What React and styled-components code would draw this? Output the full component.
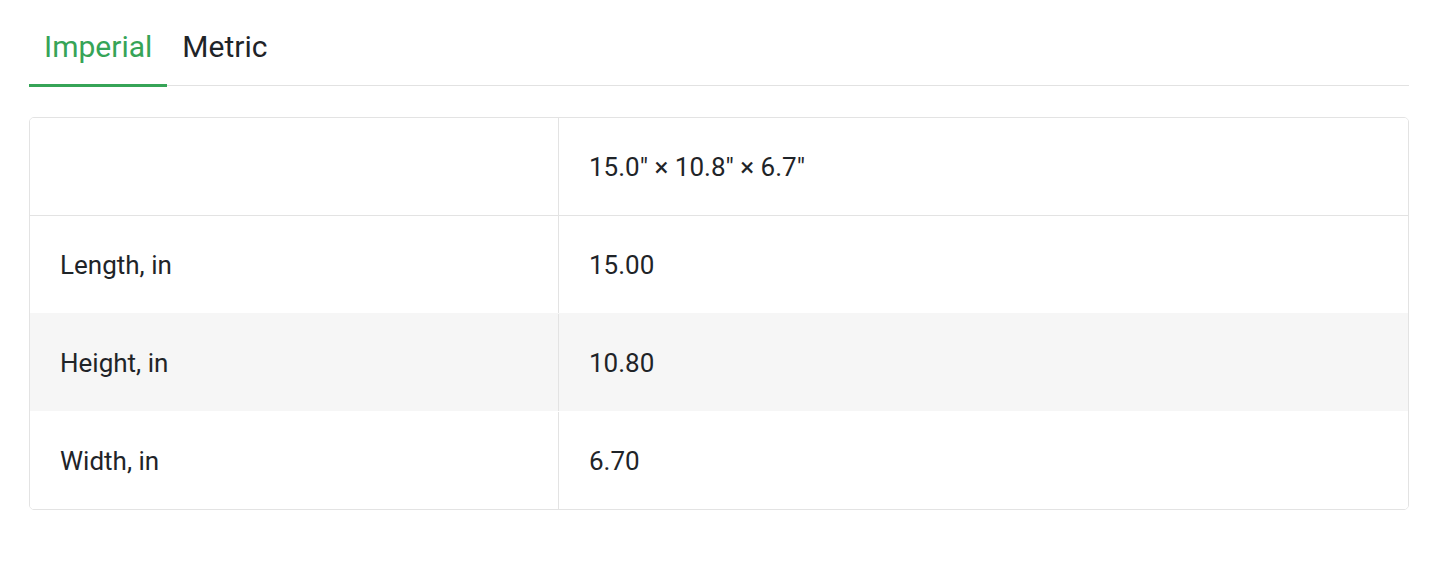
import { useState } from 'react';
import styled, { createGlobalStyle } from 'styled-components';

const GlobalStyle = createGlobalStyle`
  body {
    margin: 0;
    background: #fff;
    font-family: Roboto, "Noto Sans", sans-serif;
    color: #1f2428;
  }
`;

const Page = styled.div`
  width: 1380px;
  padding-left: 29px;
`;

const TabList = styled.div`
  display: flex;
  border-bottom: 1px solid #e2e2e2;
`;

const Tab = styled.button`
  font-family: inherit;
  font-size: 30px;
  line-height: 42px;
  padding: 26px 15px 16px;
  margin-bottom: -2px;
  background: none;
  border: none;
  border-bottom: 3px solid ${p => (p.$active ? '#36a457' : 'transparent')};
  color: ${p => (p.$active ? '#36a457' : '#1f2428')};
  cursor: pointer;
`;

const Table = styled.div`
  margin-top: 31px;
  border: 1px solid #e3e3e3;
  border-radius: 5px;
  overflow: hidden;
`;

const Row = styled.div`
  display: grid;
  grid-template-columns: 528px 1fr;
  height: 97px;
  background: ${p => (p.$shaded ? '#f6f6f6' : '#fff')};
  border-top: ${p => (p.$first ? 'none' : '1px solid #e3e3e3')};
  border-top-color: ${p => (p.$shaded || p.$afterShade ? 'transparent' : '#e3e3e3')};
`;

const Cell = styled.div`
  display: flex;
  align-items: center;
  padding-left: 30px;
  font-size: 26px;
  color: #1f2428;
  & + & {
    border-left: 1px solid #e3e3e3;
  }
`;

const data = {
  Imperial: {
    summary: '15.0" × 10.8" × 6.7"',
    rows: [
      ['Length, in', '15.00'],
      ['Height, in', '10.80'],
      ['Width, in', '6.70'],
    ],
  },
  Metric: {
    summary: '38.1 × 27.4 × 17.0 cm',
    rows: [
      ['Length, cm', '38.10'],
      ['Height, cm', '27.43'],
      ['Width, cm', '17.02'],
    ],
  },
};

const App = () => {
  const [unit, setUnit] = useState('Imperial');
  const current = data[unit];

  return (
    <Page>
      <GlobalStyle />
      <TabList>
        {Object.keys(data).map(name => (
          <Tab key={name} $active={unit === name} onClick={() => setUnit(name)}>
            {name}
          </Tab>
        ))}
      </TabList>
      <Table>
        <Row $first>
          <Cell />
          <Cell>{current.summary}</Cell>
        </Row>
        {current.rows.map(([label, value], i) => (
          <Row key={label} $shaded={i === 1} $afterShade={i === 2}>
            <Cell>{label}</Cell>
            <Cell>{value}</Cell>
          </Row>
        ))}
      </Table>
    </Page>
  );
};

export default App;
